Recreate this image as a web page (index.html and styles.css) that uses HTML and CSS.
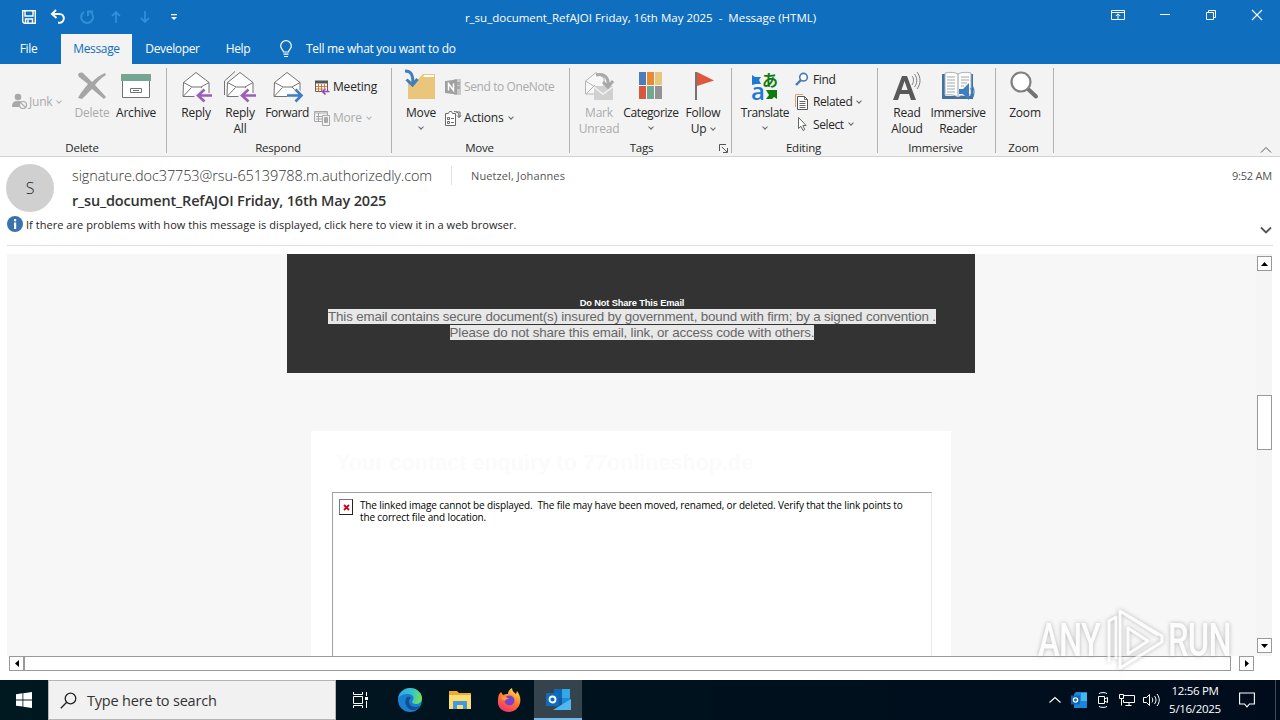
FILE: index.html
```html
<!DOCTYPE html>
<html lang="en">
<head>
  <meta charset="UTF-8">
  <meta name="viewport" content="width=device-width, initial-scale=1.0">
  <title>r_su_document_RefAJOI Friday, 16th May 2025 - Message (HTML)</title>
  <link rel="stylesheet" href="styles.css">
</head>
<body>
  <div class="window">
    <div class="titlebar">
      <div class="quick-access">
        <svg width="16" height="16" viewBox="0 0 16 16" fill="none" stroke="#fff" stroke-width="1.4"><path d="M1.7 1.7h12.6v12.6H3.2l-1.5-1.5zM4 2v5h8V2M4.5 14v-4h7v4M7 11v3"/></svg>
        <svg width="16" height="16" viewBox="0 0 16 16" fill="none" stroke="#fff" stroke-width="2"><path d="M6 1L2 5l4.500 4M2.500 5H9.500a4.300 4.300 0 0 1 0 8.700H8"/></svg>
        <svg class="faded" width="16" height="16" viewBox="0 0 16 16" fill="none" stroke="#4fb0f5" stroke-width="2"><path d="M5 2.800A6 6 0 1 0 11.500 3M9 7V2.500h5"/></svg>
        <svg class="faded" width="16" height="16" viewBox="0 0 16 16" fill="none" stroke="#4fb0f5" stroke-width="1.800"><path d="M8 14V3M4 7l4-4 4 4"/></svg>
        <svg class="faded" width="16" height="16" viewBox="0 0 16 16" fill="none" stroke="#4fb0f5" stroke-width="1.800"><path d="M8 2v11M4 9l4 4 4-4"/></svg>
        <svg width="16" height="16" viewBox="0 0 16 16" fill="#fff"><path d="M5 5h6v1.200H5zM5 8h6l-3 3z"/></svg>
      </div>
      <div class="window-title">r_su_document_RefAJOI Friday, 16th May 2025&nbsp; -&nbsp; Message (HTML)</div>
      <div class="window-controls">
        <svg width="14" height="12" viewBox="0 0 14 12" fill="none" stroke="#fff"><path d="M.5 1.500h13v9H.5zM.5 3.500h13M7 10V5M4.800 7L7 4.800 9.200 7"/></svg>
        <svg width="12" height="12" viewBox="0 0 12 12" stroke="#fff"><path d="M1 5.500h10"/></svg>
        <svg width="12" height="12" viewBox="0 0 12 12" fill="none" stroke="#fff"><path d="M1.500 3.500h7v7h-7zM3.500 3V1.500h7v7H9"/></svg>
        <svg width="12" height="12" viewBox="0 0 12 12" stroke="#fff" stroke-width="1.100"><path d="M1 1l10 10M11 1L1 11"/></svg>
      </div>
    </div>

    <div class="tabs">
      <div class="tab tab-file">File</div>
      <div class="tab active">Message</div>
      <div class="tab tab-dev">Developer</div>
      <div class="tab tab-help">Help</div>
      <div class="tell-me">
        <svg width="14" height="18" viewBox="0 0 14 18" fill="none" stroke="#fff" stroke-width="1.200"><path d="M4.500 12c0-2-2.800-3-2.800-6a5.300 5.300 0 0 1 10.600 0c0 3-2.800 4-2.800 6zM4.500 14.200h5M5 16.500h4"/></svg>
        <span>Tell me what you want to do</span>
      </div>
    </div>

    <div class="ribbon">
      <div class="group g-delete">
        <div class="group-body">
          <div class="small-col junk-col">
            <div class="small-btn disabled">
              <svg width="17" height="17" viewBox="0 0 17 17"><circle cx="7" cy="4" r="3.300" fill="#a8a8a8"/><path d="M1 14c0-5 2-6 6-6 2 0 3 .3 4 1a5 5 0 0 0-3 5z" fill="#a8a8a8"/><circle cx="12" cy="12" r="3.500" fill="#f3f3f3" stroke="#a8a8a8" stroke-width="1.200"/><path d="M9.600 9.600l4.800 4.800" stroke="#a8a8a8" stroke-width="1.200"/></svg>
              <span>Junk</span><i class="caret"></i>
            </div>
          </div>
          <div class="big-btn disabled">
            <svg width="32" height="32" viewBox="0 0 32 32" fill="#a6a6a6"><path d="M2 5c1-3 4-3 6-1l8 8c4-4 8-7 13-9l1 2c-5 3-8 6-11 10l11 12-2 2-12-10C12 23 9 26 6 29l-4-1c3-6 7-10 10-14L3 7z"/></svg>
            <span>Delete</span>
          </div>
          <div class="big-btn">
            <svg width="32" height="32" viewBox="0 0 32 32"><path d="M2.500 10v17.500h27V10" fill="#fff" stroke="#737373"/><path d="M1 4h30v7H1z" fill="#73a792"/><path d="M10.500 18.500h11v4h-11zM13 20.500h6" fill="none" stroke="#737373"/></svg>
            <span>Archive</span>
          </div>
        </div>
        <div class="group-label">Delete</div>
      </div>

      <div class="group g-respond">
        <div class="group-body">
          <div class="big-btn">
            <svg width="32" height="32" viewBox="0 0 32 32" fill="none"><path d="M3.500 12.500L16 2.500l13 10v14h-26z" fill="#fff" stroke="#737373"/><path d="M3.500 12.500L12 17h9l8-4.500M3.500 26l8-8.500M21 17l4 4" stroke="#737373"/><path d="M32 25.500H20M24 19l-7 6.500 7 6" stroke="#f3f3f3" stroke-width="5"/><path d="M32 25.500H19M24.500 19.500l-6.500 6 6.500 6" stroke="#9b5fb8" stroke-width="2.600"/></svg>
            <span>Reply</span>
          </div>
          <div class="big-btn">
            <svg width="32" height="32" viewBox="0 0 32 32" fill="none"><path d="M.5 25V11L11 1.500" stroke="#737373"/><path d="M3.500 12.500L16 2.500l13 10v14h-26z" fill="#fff" stroke="#737373"/><path d="M3.500 12.500L12 17h9l8-4.500M3.500 26l8-8.500M21 17l4 4" stroke="#737373"/><path d="M32 25.500H20M24 19l-7 6.500 7 6" stroke="#f3f3f3" stroke-width="5"/><path d="M32 25.500H19M24.500 19.500l-6.500 6 6.500 6" stroke="#9b5fb8" stroke-width="2.600"/></svg>
            <span>Reply<br>All</span>
          </div>
          <div class="big-btn wide">
            <svg width="32" height="32" viewBox="0 0 32 32" fill="none"><path d="M3.500 12.500L16 2.500l13 10v14h-26z" fill="#fff" stroke="#737373"/><path d="M3.500 12.500L12 17h9l8-4.500M3.500 26l8-8.500M21 17l4 4" stroke="#737373"/><path d="M16 25.500h12M24 19l7 6.500-7 6" stroke="#f3f3f3" stroke-width="5"/><path d="M16 25.500h14M24.500 19.500l6 6-6 6" stroke="#3f7fbf" stroke-width="2.600"/></svg>
            <span>Forward</span>
          </div>
          <div class="small-col two">
            <div class="small-btn">
              <svg width="16" height="16" viewBox="0 0 16 16" fill="none"><path d="M1.500 2.500h12v10h-12z" fill="#fff" stroke="#7a5a48"/><path d="M1 3h13" stroke="#555" stroke-width="3"/><path d="M4.500 5v7M7.500 5v7M10.500 5v4M2 7.500h11M2 10h7" stroke="#d07a40"/><path d="M15.500 12.500H9M11.500 9.500l-3 3 3 3" stroke="#8b4aac" stroke-width="1.600"/></svg>
              <span>Meeting</span>
            </div>
            <div class="small-btn disabled">
              <svg width="16" height="16" viewBox="0 0 16 16" fill="none" stroke="#a8a8a8"><path d="M.5 1.500h13v10H.5zM1 3h12M4.500 3v8M2 6.500h6M2 9h6"/><path d="M8.500 5.500h7v10h-7z" fill="#f3f3f3"/><path d="M10.500 7.500h3v5h-3z" fill="#a8a8a8"/></svg>
              <span>More</span><i class="caret"></i>
            </div>
          </div>
        </div>
        <div class="group-label">Respond</div>
      </div>

      <div class="group g-move">
        <div class="group-body">
          <div class="big-btn">
            <svg width="32" height="32" viewBox="0 0 32 32"><path d="M3 29V11l10-2 5-5h12v25z" fill="#eac57c"/><path d="M18 7l1.500-2H29v2z" fill="#fff"/><path d="M0 1c6 0 8 3 8 13" fill="none" stroke="#3f7fbf" stroke-width="3"/><path d="M1.500 9.500L7.500 15l5-6" fill="none" stroke="#3f7fbf" stroke-width="3"/></svg>
            <span>Move</span><i class="caret"></i>
          </div>
          <div class="small-col two">
            <div class="small-btn disabled onenote">
              <svg width="16" height="16" viewBox="0 0 16 16"><path d="M9 0h7v16H9z" fill="#c9c9c9"/><path d="M10 3h5v3h-5zM10 7h5v3h-5z" fill="#aaa"/><path d="M0 2l12-1.500v15L0 14z" fill="#a0a0a0"/><path d="M3.500 11.500v-7l5 7v-7" fill="none" stroke="#fff" stroke-width="1.500"/></svg>
              <span>Send to OneNote</span>
            </div>
            <div class="small-btn">
              <svg width="16" height="16" viewBox="0 0 16 16" fill="none" stroke="#6a6a6a"><path d="M.5 3.500h3l1-2h2l1 2h3v12H.5z" fill="#fff"/><path d="M2.500 7.500h2v2h-2zM2.500 11.500h2v2h-2zM6 8.500h3M6 12.500h3M9 1.500c4 0 5 2 5 6M11 2h4v5M12 5.500l2 2 2-2"/></svg>
              <span>Actions</span><i class="caret"></i>
            </div>
          </div>
        </div>
        <div class="group-label">Move</div>
      </div>

      <div class="group g-tags">
        <div class="group-body">
          <div class="big-btn mark disabled">
            <svg width="32" height="32" viewBox="0 0 32 32" fill="none"><path d="M2.500 24V11L13 2.500 21 8v16z" fill="#f7f7f7" stroke="#b5b5b5"/><path d="M2.500 11l8 5M3 24l9-9" stroke="#b5b5b5"/><path d="M11 16h19v14H11z" fill="#d0d0d0"/><path d="M11 17l9 7 10-7" stroke="#f3f3f3" stroke-width="1.500"/><path d="M13 5c8-2 13 2 12 11M20 12l5 5 5-6" stroke="#a8a8a8" stroke-width="3"/></svg>
            <span>Mark<br>Unread</span>
          </div>
          <div class="big-btn categorize">
            <svg width="32" height="32" viewBox="0 0 32 32"><path d="M4 2h7v13H4z" fill="#4a7ebb"/><path d="M12 2h7v13h-7z" fill="#e88b35"/><path d="M20 2h7v13h-7z" fill="#eac57c"/><path d="M4 16h7v13H4z" fill="#d9573f"/><path d="M12 16h7v13h-7z" fill="#73a792"/><path d="M20 16h7v13h-7z" fill="#939393"/></svg>
            <span>Categorize</span><i class="caret"></i>
          </div>
          <div class="big-btn mark">
            <svg width="32" height="32" viewBox="0 0 32 32"><path d="M8 2h2v28H8z" fill="#737373"/><path d="M10 2l17 8.500L10 16z" fill="#e0563d"/></svg>
            <span>Follow<br>Up <i class="caret"></i></span>
          </div>
        </div>
        <div class="group-label">Tags
          <svg class="launcher" width="9" height="9" viewBox="0 0 9 9" fill="none" stroke="#555"><path d="M.5 7V.5H7M3 3l5 5M8.500 4v4.500H4"/></svg>
        </div>
      </div>

      <div class="group g-editing">
        <div class="group-body">
          <div class="big-btn translate">
            <svg width="32" height="32" viewBox="0 0 32 32"><path d="M3 5l3 2h6l-2 3 2 4H7l-4 1z" fill="#1d7ad2"/><path d="M17 20h11v9l-3-2-2 2h-6l3-4z" fill="#107c10"/><text class="glyph-ja" x="13" y="16">あ</text><text class="glyph-a" x="2" y="30">a</text></svg>
            <span>Translate</span><i class="caret"></i>
          </div>
          <div class="small-col three">
            <div class="small-btn">
              <svg width="14" height="14" viewBox="0 0 14 14" fill="none"><path d="M6 8L1 13" stroke="#4a78b0" stroke-width="2.400"/><circle cx="8.500" cy="5.200" r="3.800" fill="#fff" stroke="#4a78b0" stroke-width="1.600"/></svg>
              <span>Find</span>
            </div>
            <div class="small-btn">
              <svg width="14" height="16" viewBox="0 0 14 16" fill="none"><path d="M.5 13V.5H8" stroke="#e0a070"/><path d="M2.500 2.500h7l3 3v10h-10z" fill="#fff" stroke="#555"/><path d="M4.500 7.500h6M4.500 9.500h6M4.500 11.500h6M4.500 13.500h6M9.500 2.500v3h3" stroke="#666"/></svg>
              <span>Related</span><i class="caret"></i>
            </div>
            <div class="small-btn">
              <svg width="14" height="16" viewBox="0 0 14 16"><path d="M3.500 1.500v11l2.500-2.200 2 4.200 1.800-1-2-4h3.400z" fill="#fff" stroke="#666"/></svg>
              <span>Select</span><i class="caret"></i>
            </div>
          </div>
        </div>
        <div class="group-label">Editing</div>
      </div>

      <div class="group g-immersive">
        <div class="group-body">
          <div class="big-btn">
            <svg width="32" height="32" viewBox="0 0 32 32"><path fill-rule="evenodd" d="M2 30L11 6h5l9 24h-5l-2-6H9l-2 6zM10.500 20h6.200L13.500 11z" fill="#595959"/><path d="M21 6c2 2 2 6 0 9M23.500 4c3 4 3 9 0 13M26 2c4 5 4 12 0 17" fill="none" stroke="#808080"/></svg>
            <span>Read<br>Aloud</span>
          </div>
          <div class="big-btn reader">
            <svg width="32" height="32" viewBox="0 0 32 32" fill="none"><path d="M0 4h3v22h26V4h2v25H0z" fill="#44729f"/><path d="M3 3c5-1 10-1 13 1 3-2 9-2 13-1v22c-5-1-10 0-13 2-3-2-8-3-13-2z" fill="#fff" stroke="#a3b2c0"/><path d="M16 4v22" stroke="#8c9aa6"/><path d="M5 7h8M5 10h8M5 13h8M5 16h8M5 19h8M5 22h8M19 7h8M19 10h8M19 13h6M19 16h3" stroke="#a5a5a5"/><path d="M17 19h4l6-6v17l-6-6h-4z" fill="#3f7fbf"/><path d="M28.500 18c2 3 2 5 0 8M30.500 16c2 4 2 8 0 12" stroke="#3f7fbf" stroke-width="1.200"/></svg>
            <span>Immersive<br>Reader</span>
          </div>
        </div>
        <div class="group-label">Immersive</div>
      </div>

      <div class="group g-zoom">
        <div class="group-body">
          <div class="big-btn">
            <svg width="32" height="32" viewBox="0 0 32 32"><path d="M19 19l8 7.500" stroke="#737373" stroke-width="4" stroke-linecap="round"/><circle cx="12" cy="12" r="9.500" fill="#fff" stroke="#808080" stroke-width="2.200"/></svg>
            <span>Zoom</span>
          </div>
        </div>
        <div class="group-label">Zoom</div>
      </div>

      <svg class="collapse" width="12" height="8" viewBox="0 0 12 8" fill="none" stroke="#555"><path d="M1 6.500L6 1.500l5 5"/></svg>
    </div>

    <div class="mail-header">
      <div class="avatar">S</div>
      <div class="mail-info">
        <div class="from-row">
          <span class="sender">signature.doc37753@rsu-65139788.m.authorizedly.com</span>
          <span class="recipient">Nuetzel, Johannes</span>
          <span class="time">9:52 AM</span>
        </div>
        <div class="subject">r_su_document_RefAJOI Friday, 16th May 2025</div>
      </div>
      <div class="info-bar">
        <svg width="16" height="16" viewBox="0 0 16 16"><circle cx="8" cy="8" r="8" fill="#3a73b0"/><path d="M7 3h2.200v2.200H7zM7 6.500h2.200V13H7z" fill="#fff"/></svg>
        <span>If there are problems with how this message is displayed, click here to view it in a web browser.</span>
        <svg class="expand" width="12" height="8" viewBox="0 0 12 8" fill="none" stroke="#555" stroke-width="1.800"><path d="M1 1.500l5 5 5-5"/></svg>
      </div>
    </div>

    <div class="reading-pane">
      <div class="mail-body">
        <div class="notice">
          <div class="notice-title">Do Not Share This Email</div>
          <div class="notice-text"><span>This email contains secure document(s) insured by government, bound with firm; by a signed convention .</span></div>
          <div class="notice-text"><span>Please do not share this email, link, or access code with others.</span></div>
        </div>
        <div class="card">
          <div class="card-title">Your contact enquiry to 77onlineshop.de</div>
          <div class="missing-image">
            <div class="broken"><svg width="7" height="7" viewBox="0 0 7 7" stroke="#d0021b" stroke-width="1.800"><path d="M1 1l5 5M6 1L1 6"/></svg></div>
            <p>The linked image cannot be displayed.&nbsp; The file may have been moved, renamed, or deleted. Verify that the link points to<br>the correct file and location.</p>
          </div>
        </div>
      </div>
      <div class="vscroll">
        <div class="scroll-btn"><svg width="7" height="4" viewBox="0 0 7 4"><path d="M0 4L3.500 0 7 4z"/></svg></div>
        <div class="vthumb"></div>
        <div class="scroll-btn"><svg width="7" height="4" viewBox="0 0 7 4"><path d="M0 0h7L3.500 4z"/></svg></div>
      </div>
    </div>
    <div class="hscroll">
      <div class="scroll-btn"><svg width="4" height="7" viewBox="0 0 4 7"><path d="M4 0v7L0 3.500z"/></svg></div>
      <div class="hthumb"></div>
      <div class="scroll-btn"><svg width="4" height="7" viewBox="0 0 4 7"><path d="M0 0v7l4-3.500z"/></svg></div>
    </div>
  </div>

  <div class="watermark">
    <span>ANY</span>
    <svg width="58" height="64" viewBox="0 0 58 64" fill="none" stroke-linejoin="round"><path d="M3 54V13l7-4v42M14 3l42 25v6L14 60V3l38 24M22 20v26l20-13z" stroke="#fff" stroke-width="3"/></svg>
    <span>RUN</span>
  </div>

  <div class="taskbar">
    <div class="start">
      <svg width="16" height="16" viewBox="0 0 16 16" fill="#fff"><path d="M0 2.200L6.500 1.300v6.200H0zM7.300 1.200L16 0v7.500H7.300zM0 8.400h6.500v6.200L0 13.700zM7.300 8.400H16V16l-8.700-1.200z"/></svg>
    </div>
    <div class="search">
      <svg width="17" height="17" viewBox="0 0 17 17" fill="none" stroke="#222" stroke-width="1.300"><circle cx="10.500" cy="6.500" r="5.300"/><path d="M6.700 10.300L.8 16.200"/></svg>
      <span>Type here to search</span>
    </div>
    <div class="task">
      <svg width="17" height="16" viewBox="0 0 17 16" fill="none" stroke="#fff"><path d="M1.500 4.500h9v7h-9zM1.500 0v2.500h9V0M1.500 16v-2.500h9V16M14.500 0v4M14.500 9v7"/><path d="M13 5h3v3h-3z" fill="#fff" stroke="none"/></svg>
    </div>
    <div class="task">
      <svg width="24" height="24" viewBox="0 0 24 24">
        <defs>
          <linearGradient id="edge-top" x1="0" y1="0.300" x2="1" y2="0.500"><stop offset="0" stop-color="#2aa8e8"/><stop offset=".55" stop-color="#35c4c8"/><stop offset="1" stop-color="#6de05a"/></linearGradient>
          <linearGradient id="fox" x1=".8" y1="0" x2=".3" y2="1"><stop offset="0" stop-color="#ffe14a"/><stop offset=".5" stop-color="#ff7b2d"/><stop offset="1" stop-color="#f0306e"/></linearGradient>
        </defs>
        <circle cx="12" cy="12" r="12" fill="#1b7fd0"/>
        <path d="M0 11C1 4 6 0 12 0c7 0 12 5 12 10 0 4-3 6-6 6-2 0-4-1-4-2s1.500-1.500 1.500-4S13 6 9 6c-4 0-8 2-9 5z" fill="url(#edge-top)"/>
        <path d="M9 9c-3 4-2 10 4 13 4 .5 7-1 9-4-5 2-10 1-11-4 0-2 .5-3 2-4-1-1-2-1.500-4-1z" fill="#124f94"/>
      </svg>
    </div>
    <div class="task">
      <svg width="22" height="20" viewBox="0 0 22 20"><path d="M0 1h8l2 2h12v16H0z" fill="#f0a92e"/><path d="M0 5h22v14H0z" fill="#ffdc73"/><path d="M4 11h14v8h-4v-4H8v4H4z" fill="#3f9bdc"/></svg>
    </div>
    <div class="task">
      <svg width="24" height="24" viewBox="0 0 24 24"><path d="M4 4l2 3c2-1 3-1 5-1 0-3 2-5 4-6 0 3 2 4 4 6l1-3c3 4 4 8 3 12-1 5-6 9-11 9C5 24 0 19 1 12c0-4 1-6 3-8z" fill="url(#fox)"/><circle cx="12.500" cy="12.500" r="5" fill="#7b3fd0"/><path d="M4 9c3-1 6 0 8 2-3 0-3 1-4 2-2-1-4-2-4-4z" fill="#ff9640"/></svg>
    </div>
    <div class="task current">
      <svg width="25" height="24" viewBox="0 0 25 24"><path d="M8 2h8v9H8z" fill="#1066b5"/><path d="M16 2h8v9h-8z" fill="#32a9e7"/><path d="M8 11h8v9H8z" fill="#185a97"/><path d="M16 11h8v6h-8z" fill="#1b8ad8"/><path d="M7 23l18-11v11z" fill="#50b8ec"/><path d="M0 6h13v13H0z" fill="#0f6cbd"/><circle cx="6.500" cy="12.500" r="3" fill="none" stroke="#fff" stroke-width="1.800"/></svg>
    </div>
    <div class="tray">
      <div class="tray-icon"><svg width="12" height="8" viewBox="0 0 12 8" fill="none" stroke="#fff" stroke-width="1.100"><path d="M.5 6.500L6 1.500l5.500 5"/></svg></div>
      <div class="tray-icon"><svg width="16" height="16" viewBox="0 0 16 16"><path d="M5 0h11v16H3V2z" fill="#1a86d8"/><path d="M10 1h6v8h-6z" fill="#45b7ef"/><path d="M0 3.500h9v9H0z" fill="#0f63b5"/><circle cx="4.500" cy="8" r="2.100" fill="none" stroke="#fff" stroke-width="1.300"/></svg></div>
      <div class="tray-icon"><svg width="12" height="16" viewBox="0 0 12 16" fill="none" stroke="#fff"><path d="M1.500 4.500h6v7h-6zM7.500 7l3-1.500v5L7.500 9M2 1.500C4 .3 8 .3 10 1.500M2 14.500c2 1.200 6 1.200 8 0"/></svg></div>
      <div class="tray-icon"><svg width="16" height="14" viewBox="0 0 16 14" fill="none" stroke="#fff"><path d="M5 2.500h10.500v7H4.500V7M10 9.500v3M6.500 12.500h6M.5 1.500h4v4h-4zM2.500 5.500v7"/></svg></div>
      <div class="tray-icon"><svg width="17" height="14" viewBox="0 0 17 14" fill="none" stroke="#fff"><path d="M.5 4.500h3l3-3v11l-3-3h-3zM9 4.500c1 1.500 1 3.500 0 5M11.500 3c2 2.500 2 5.500 0 8M14 1c3 4 3 8 0 12"/></svg></div>
      <div class="clock">12:56 PM<br>5/16/2025</div>
      <svg class="action-center" width="16" height="16" viewBox="0 0 16 16" fill="none" stroke="#fff" stroke-width="1.100"><path d="M.6 1h14.800v11H10.500L8 14.800 5.500 12H.6z"/></svg>
    </div>
  </div>
</body>
</html>
```
FILE: styles.css
```css
* {
  box-sizing: border-box;
}

body {
  font-family: "Open Sans", "Noto Sans", sans-serif;
  font-size: 11.5px;
  letter-spacing: -0.2px;
  margin: 0;
  width: 1280px;
  height: 720px;
  overflow: hidden;
  color: #262626;
  background-color: #fff;
}

svg {
  display: block;
  flex: none;
  overflow: visible;
}

.window {
  height: 680px;
}

/* title bar and tabs */
.titlebar {
  display: flex;
  justify-content: space-between;
  height: 34px;
  padding: 0 17px 0 21px;
  color: #fff;
  background-color: #106ebe;
}

.quick-access {
  display: flex;
  align-items: center;
  gap: 13px;
  width: 398px;
}

.faded {
  opacity: 0.5;
}

.window-title {
  line-height: 35px;
  letter-spacing: 0;
  white-space: nowrap;
}

.window-controls {
  display: flex;
  align-items: center;
  justify-content: flex-end;
  gap: 34px;
  width: 401px;
  height: 30px;
}

.tabs {
  display: flex;
  height: 30px;
  line-height: 30px;
  font-size: 12px;
  color: #fff;
  background-color: #106ebe;
}

.tab {
  text-align: center;
  letter-spacing: -0.35px;
}

.tab-file {
  width: 61px;
  padding-right: 4px;
}

.tab.active {
  width: 71px;
  color: #106ebe;
  background-color: #f3f3f3;
}

.tab-dev {
  width: 81px;
}

.tab-help {
  width: 50px;
}

.tell-me {
  display: flex;
  align-items: center;
  gap: 13px;
  padding-left: 16px;
  letter-spacing: -0.3px;
}

/* ribbon */
.ribbon {
  display: flex;
  height: 93px;
  background-color: #f3f3f3;
  border-bottom: 1px solid #d2d2d2;
  font-size: 12px;
}

.group {
  height: 85px;
  margin-top: 4px;
  border-right: 1px solid #b1b1b1;
}

.group-body {
  display: flex;
  height: 72px;
}

.g-delete { width: 167px; }
.g-respond { width: 225px; }
.g-move { width: 178px; }
.g-tags { width: 162px; }
.g-editing { width: 146px; }
.g-immersive { width: 118px; }
.g-zoom { width: 58px; }

.g-respond .group-body,
.g-move .group-body,
.g-immersive .group-body,
.g-zoom .group-body {
  padding-left: 7px;
}

.g-tags .group-body,
.g-editing .group-body {
  padding-left: 5px;
}

.group-label {
  position: relative;
  padding-right: 2px;
  line-height: 15px;
  font-size: 11.5px;
  text-align: center;
}

.g-tags .group-label {
  padding-right: 18px;
}

.launcher {
  position: absolute;
  right: 3px;
  top: 4px;
}

.big-btn {
  display: flex;
  flex-direction: column;
  align-items: center;
  width: 44px;
  padding-top: 2px;
  line-height: 16px;
  text-align: center;
  white-space: nowrap;
}

.big-btn span {
  margin-top: 3px;
}

.big-btn > .caret {
  margin-top: 4px;
}

.wide { width: 50px; letter-spacing: -0.4px; }
.mark { width: 48px; }
.categorize,
.translate { width: 56px; letter-spacing: -0.4px; }
.reader { width: 58px; letter-spacing: -0.4px; }

.disabled {
  color: #ababab;
}

.caret {
  display: inline-block;
  width: 4px;
  height: 4px;
  border: solid #666;
  border-width: 0 1px 1px 0;
  transform: rotate(45deg);
  margin: -2px 0 0 5px;
}

.big-btn > .caret {
  margin-left: 0;
}

.disabled .caret {
  border-color: #b5b5b5;
}

.big-btn span .caret {
  margin: 0 0 3px 2px;
}

.small-col {
  display: flex;
  flex-direction: column;
  padding-left: 2px;
}

.small-btn {
  display: flex;
  align-items: center;
  white-space: nowrap;
}

.small-btn span {
  margin-left: 3px;
}

.onenote {
  letter-spacing: -0.4px;
}

.junk-col {
  width: 70px;
  padding: 25px 0 0 11px;
}

.junk-col .small-btn span {
  margin-left: 1px;
}

.two {
  padding-top: 3px;
}

.two .small-btn {
  height: 31px;
}

.three {
  letter-spacing: -0.4px;
}

.three .small-btn {
  height: 23px;
  margin-top: -0.5px;
}

.three .small-btn span {
  margin-left: 4px;
}

.glyph-ja {
  font-family: "Noto Sans CJK JP", sans-serif;
  font-size: 16px;
  font-weight: 700;
  fill: #107c10;
}

.glyph-a {
  font-size: 24px;
  font-weight: 600;
  fill: #1d7ad2;
}

.collapse {
  margin: 82px 8px 0 auto;
}

/* message header */
.mail-header {
  display: flex;
  flex-wrap: wrap;
  align-content: flex-start;
  height: 89px;
  margin: 0 7px;
  padding-top: 7px;
  border-bottom: 1px solid #e1e1e1;
}

.avatar {
  width: 48px;
  height: 48px;
  margin-left: -1px;
  border-radius: 50%;
  line-height: 49px;
  text-align: center;
  font-size: 16px;
  font-weight: 300;
  background-color: #d0d0d0;
}

.mail-info {
  width: 1219px;
  padding-left: 18px;
}

.from-row {
  display: flex;
  align-items: center;
  height: 22px;
  color: #555;
}

.sender {
  width: 380px;
  border-right: 1px solid #e1e1e1;
  font-size: 14.5px;
  font-weight: 300;
  letter-spacing: -0.12px;
  color: #333;
}

.recipient {
  padding-left: 19px;
  font-size: 11px;
  letter-spacing: 0.1px;
}

.time {
  margin-left: auto;
  padding-right: 1px;
  font-size: 11px;
}

.subject {
  line-height: 29px;
  font-size: 14.5px;
  font-weight: 600;
  letter-spacing: -0.17px;
  color: #333;
}

.info-bar {
  display: flex;
  align-items: center;
  width: 100%;
  height: 20px;
  margin-top: -1px;
  font-size: 11px;
  letter-spacing: 0.04px;
}

.info-bar span {
  margin-left: 3px;
}

.expand {
  margin: 12px 1px 0 auto;
}

/* message body */
.reading-pane {
  display: flex;
  height: 402px;
  margin: 8px 8px 0 7px;
}

.mail-body {
  width: 1249px;
  padding-left: 280px;
  overflow: hidden;
  background-color: #f7f7f7;
}

.notice {
  width: 688px;
  height: 119px;
  padding: 43px 0 0 2px;
  text-align: center;
  font-family: "Liberation Sans", Arial, sans-serif;
  background-color: #333;
}

.notice-title {
  line-height: 12px;
  font-size: 9.3px;
  font-weight: 700;
  letter-spacing: -0.15px;
  color: #fff;
}

.notice-text {
  height: 16px;
  line-height: 16px;
  font-size: 13.33px;
  letter-spacing: -0.155px;
  color: #666;
}

.notice-text span {
  background-color: #e8e8e8;
}

.card {
  width: 640px;
  height: 300px;
  margin: 58px 0 0 24px;
  padding: 16px 20px 0 21px;
  background-color: #fff;
}

.card-title {
  height: 45px;
  padding-left: 4px;
  line-height: 32px;
  font-family: "Liberation Sans", Arial, sans-serif;
  font-size: 21.5px;
  font-weight: 700;
  letter-spacing: 0.05px;
  color: #fbfbfb;
}

.missing-image {
  display: flex;
  width: 600px;
  height: 240px;
  padding: 6px;
  border: 1px solid #a0a0a0;
  border-right-color: #e8e8e8;
  color: #000;
}

.broken {
  display: flex;
  align-items: center;
  justify-content: center;
  width: 14px;
  height: 16px;
  border: 1px solid #777;
  border-right-color: #222;
  border-bottom-color: #222;
}

.missing-image p {
  margin: 0 0 0 7px;
  line-height: 12px;
  font-size: 10px;
  letter-spacing: -0.14px;
  white-space: nowrap;
}

/* scroll bars */
.vscroll {
  display: flex;
  flex-direction: column;
  justify-content: space-between;
  width: 16px;
  padding: 2px 0 3px 1px;
  background-color: #f5f5f5;
}

.scroll-btn {
  display: flex;
  align-items: center;
  justify-content: center;
  width: 15px;
  height: 15px;
  border: 1px solid #999;
  background-color: #fff;
}

.vthumb {
  height: 55px;
  margin-bottom: 65px;
  border: 1px solid #999;
  background-color: #fff;
}

.hscroll {
  display: flex;
  width: 1245px;
  margin-left: 9px;
}

.hthumb {
  width: 1207px;
  height: 15px;
  margin-right: auto;
  border: 1px solid #999;
  background-color: #fff;
}

.watermark {
  position: absolute;
  left: 1038px;
  top: 608px;
  display: flex;
  align-items: center;
  gap: 4px;
  height: 64px;
  font-family: Roboto, sans-serif;
  font-size: 46px;
  font-weight: 500;
  letter-spacing: -1px;
  color: #fff;
  opacity: 0.7;
  filter: drop-shadow(0 0 2px #999);
}

.watermark span {
  width: 64px;
  transform: scaleX(0.71);
  transform-origin: left;
}

/* taskbar */
.taskbar {
  display: flex;
  height: 40px;
  background: linear-gradient(90deg, #001820, #000c1c);
}

.start {
  display: flex;
  align-items: center;
  justify-content: center;
  width: 48px;
}

.search {
  display: flex;
  align-items: center;
  gap: 10px;
  width: 288px;
  padding-left: 11px;
  border: 1px solid #b5b5b5;
  font-size: 14.5px;
  color: #333;
  background-color: #f1f1f1;
}

.task {
  display: flex;
  align-items: center;
  justify-content: center;
  width: 49.5px;
}

.task.current {
  width: 48px;
  background-color: #35434d;
  border-bottom: 2px solid #76b9ed;
}

.tray {
  display: flex;
  align-items: center;
  margin: 0 4px 0 auto;
  border-right: 1px solid #445;
  color: #fff;
}

.tray-icon {
  display: flex;
  align-items: center;
  justify-content: center;
  width: 24px;
}

.clock {
  width: 64px;
  line-height: 18px;
  font-size: 11.5px;
  letter-spacing: -0.3px;
  text-align: center;
}

.action-center {
  margin: 0 20px 0 12px;
}
```
